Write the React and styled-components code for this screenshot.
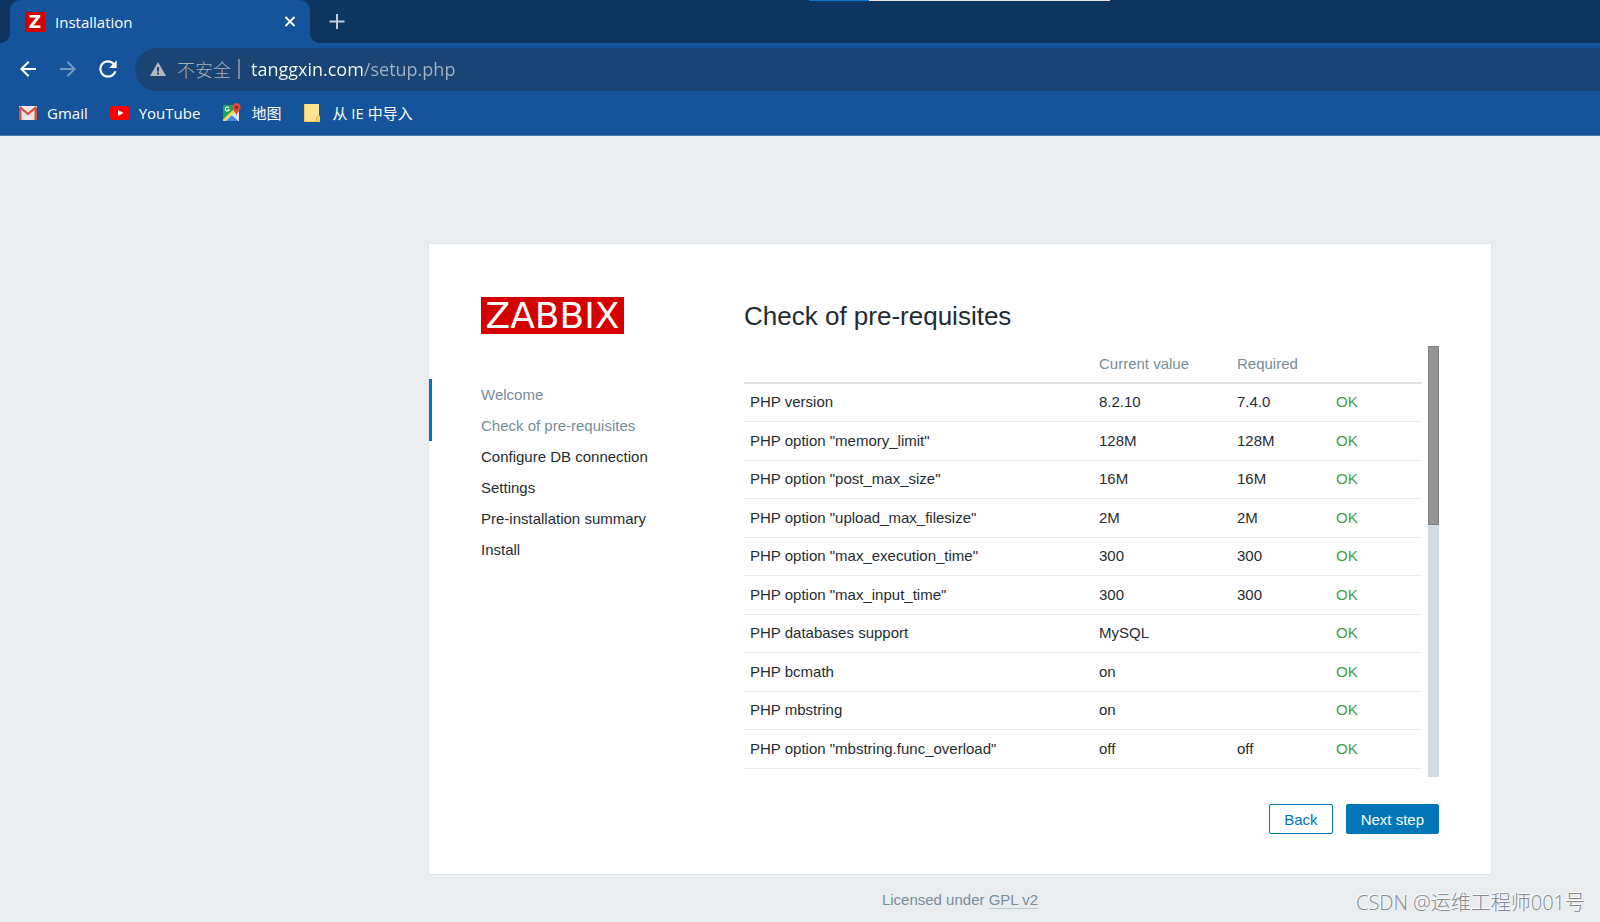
import React from "react";
import styled, { createGlobalStyle } from "styled-components";

const GlobalStyle = createGlobalStyle`
  * {
    box-sizing: border-box;
  }
  body {
    margin: 0;
    background: #e9edf0;
    color: #1f2c33;
    font-family: "Liberation Sans", Arial, sans-serif;
    font-size: 15px;
    line-height: 20px;
  }
`;

const uiFont = `"Open Sans", "Noto Sans CJK SC", sans-serif`;

const Screen = styled.div`
  position: relative;
  min-height: 100vh;
  overflow: hidden;
`;

/* browser */

const Browser = styled.header`
  background: #15539a;
  border-bottom: 1px solid #4a7ab3;
  color: #fff;
  font-family: ${uiFont};
`;

const TabStrip = styled.div`
  position: relative;
  display: flex;
  align-items: center;
  gap: 17px;
  height: 43px;
  padding-left: 10px;
  background: #0c3560;
`;

const Tab = styled.div`
  position: relative;
  display: flex;
  align-items: center;
  gap: 10px;
  width: 300px;
  height: 43px;
  padding: 0 10px 0 15px;
  border-radius: 10px 10px 0 0;
  background: #15539a;

  &::before,
  &::after {
    content: "";
    position: absolute;
    bottom: 0;
    width: 10px;
    height: 10px;
  }
  &::before {
    right: 100%;
    background: radial-gradient(circle at 0 0, transparent 10px, #15539a 10px);
  }
  &::after {
    left: 100%;
    background: radial-gradient(
      circle at 100% 0,
      transparent 10px,
      #15539a 10px
    );
  }
`;

const Favicon = styled.span`
  width: 20px;
  height: 20px;
  background: #d40000;
  font: bold 17px/20px "DejaVu Sans", sans-serif;
  text-align: center;
`;

const TabTitle = styled.span`
  flex: 1;
`;

const IconButton = styled.button`
  display: flex;
  align-items: center;
  justify-content: center;
  width: ${(p) => p.$size}px;
  height: ${(p) => p.$size}px;
  padding: 0;
  border: 0;
  background: none;
  color: ${(p) => p.$color || "#fff"};
`;

const LoadingLine = styled.div`
  position: absolute;
  top: 0;
  left: 809px;
  width: 301px;
  height: 1px;
  background: linear-gradient(to right, #0078d7 60px, #e6e6e6 60px);
`;

const Toolbar = styled.div`
  display: flex;
  align-items: center;
  gap: 14px;
  padding: 5px 0 0 15px;

  ${IconButton} {
    margin-bottom: 2px;
  }
`;

const AddressBar = styled.label`
  flex: 1;
  display: flex;
  align-items: center;
  height: 43px;
  padding: 0 0 2px 15px;
  border-radius: 22px 0 0 22px;
  background: #1a4473;
  font-size: 18px;
`;

const Insecure = styled.span`
  margin-left: 11px;
  padding-right: 7px;
  border-right: 2px solid #7189a5;
  color: #a9b1bb;
  font-family: "Noto Sans CJK SC", sans-serif;
  font-weight: 300;
`;

const AddressInput = styled.input`
  flex: 1;
  min-width: 0;
  height: 30px;
  margin-left: 11px;
  padding: 0;
  border: 0;
  background: linear-gradient(to right, #fff 113px, #a3b4c7 113px);
  background-clip: text;
  color: transparent;
  font-family: ${uiFont};
  font-size: 18px;
`;

const Bookmarks = styled.nav`
  display: flex;
  align-items: center;
  gap: 22px;
  height: 44px;
  padding-left: 18px;
`;

const Bookmark = styled.a`
  display: flex;
  align-items: center;
  gap: 9px;
  color: #fff;
  text-decoration: none;
`;

/* setup wizard */

const Page = styled.main`
  display: flex;
  flex-direction: column;
  align-items: center;
  padding: 107px 0 0 320px;
`;

const Card = styled.div`
  display: flex;
  width: 100%;
  max-width: 1064px;
  border: 1px solid #dfe4e7;
  background: #fff;
`;

const Sidebar = styled.aside`
  width: 315px;
  padding-top: 53px;
`;

const Logo = styled.div`
  width: 143px;
  height: 37px;
  margin: 0 0 45px 52px;
  background: #d40000;
  color: #fff;
  font: 36px/38px "DejaVu Sans", sans-serif;
  text-align: center;
`;

const Steps = styled.ul`
  margin: 0;
  padding: 0;
  list-style: none;
`;

const Step = styled.li`
  padding-left: 49px;
  border-left: 3px solid ${(p) => (p.$done ? "#0275b8" : "transparent")};
  color: ${(p) => (p.$done ? "#768d99" : "inherit")};
  line-height: 31px;
`;

const Content = styled.section`
  flex: 1;
  min-width: 0;
  padding: 57px 52px 40px 0;
`;

const Title = styled.h1`
  margin: 0 0 15px;
  font-size: 26px;
  font-weight: 400;
  line-height: 30px;
`;

const ScrollArea = styled.div`
  display: flex;
  gap: 6px;
  height: 431px;
`;

const ScrollTrack = styled.div`
  width: 11px;
  background: #d2d9df;
`;

const ScrollThumb = styled.div`
  height: 179px;
  border: 1px solid #7f7f7f;
  background: #939493;
`;

const TableBox = styled.div`
  flex: 1;
  min-width: 0;
  overflow: hidden;
`;

const Table = styled.table`
  width: 100%;
  table-layout: fixed;
  border-collapse: separate;
  border-spacing: 0;
`;

const HeadCell = styled.th`
  width: ${(p) => p.$width || "auto"};
  height: 38px;
  padding: 0 6px;
  border-bottom: 2px solid #dce2e5;
  color: #768d99;
  font-weight: 400;
  text-align: left;
`;

const Row = styled.tr`
  height: 38px;

  &:nth-child(even) {
    height: 39px;
  }
`;

const Cell = styled.td`
  padding: 0 6px 1px;
  border-bottom: 1px solid #ebeef0;
  color: ${(p) => (p.$ok ? "#429e47" : "inherit")};
`;

const Actions = styled.div`
  display: flex;
  justify-content: flex-end;
  gap: 13px;
  margin-top: 27px;
`;

const Button = styled.button`
  height: 30px;
  padding: 1px 14px 0;
  border: 1px solid #0275b8;
  border-radius: 2px;
  background: ${(p) => (p.$primary ? "#0275b8" : "#fff")};
  color: ${(p) => (p.$primary ? "#fff" : "#0275b8")};
  font: inherit;
`;

const License = styled.footer`
  margin-top: 15px;
  color: #768d99;
`;

const LicenseLink = styled.a`
  border-bottom: 1px solid #c0cad0;
  color: inherit;
  text-decoration: none;
`;

const Watermark = styled.div`
  position: absolute;
  right: 15px;
  bottom: 6px;
  color: #85898b;
  font: 300 20px/26px ${uiFont};
  text-shadow: -1px -1px 0 #fff;
`;

const BackIcon = () => (
  <svg width="24" height="24" viewBox="0 0 24 24" fill="currentColor">
    <path d="M20 11H7.83l5.59-5.59L12 4l-8 8 8 8 1.41-1.41L7.83 13H20v-2z" />
  </svg>
);

const ForwardIcon = () => (
  <svg width="24" height="24" viewBox="0 0 24 24" fill="currentColor">
    <path d="M4 11h12.17l-5.59-5.59L12 4l8 8-8 8-1.41-1.41L16.17 13H4v-2z" />
  </svg>
);

const ReloadIcon = () => (
  <svg width="26" height="26" viewBox="0 0 24 24" fill="currentColor">
    <path d="M17.65 6.35C16.2 4.9 14.21 4 12 4c-4.42 0-7.99 3.58-7.99 8s3.57 8 7.99 8c3.73 0 6.84-2.55 7.73-6h-2.08c-.82 2.33-3.04 4-5.65 4-3.31 0-6-2.69-6-6s2.69-6 6-6c1.66 0 3.14.69 4.22 1.78L13 11h7V4l-2.35 2.35z" />
  </svg>
);

const CloseIcon = () => (
  <svg width="12" height="12" viewBox="0 0 12 12" stroke="currentColor">
    <path d="M1.500 1l9 9M10.500 1l-9 9" strokeWidth="1.800" />
  </svg>
);

const PlusIcon = () => (
  <svg width="16" height="16" viewBox="0 0 16 16" stroke="currentColor">
    <path d="M8 0v15M0.500 7.500h15" strokeWidth="2" />
  </svg>
);

const WarningIcon = () => (
  <svg width="16" height="14" viewBox="0 0 16 14">
    <path d="M8 0l8 14H0z" fill="#b4babf" />
    <path d="M8 5v4.500M8 10.500v2" stroke="#1a4473" strokeWidth="2" />
  </svg>
);

const GmailIcon = () => (
  <svg width="20" height="20" viewBox="0 0 20 20">
    <rect x="1" y="3" width="18" height="14" rx="1" fill="#e9e9ea" />
    <path d="M3 17l5-6M17 17l-5-6" stroke="#cfcfd2" />
    <path d="M1 17V4.500L3.500 6V17z" fill="#d6503f" />
    <path d="M19 17V4.500L16.500 6V17z" fill="#d6503f" />
    <path d="M1.800 4l8.200 7 8.200-7" fill="none" stroke="#dc4a3d" strokeWidth="2.200" />
  </svg>
);

const YouTubeIcon = () => (
  <svg width="20" height="20" viewBox="0 0 20 20">
    <rect y="3" width="20" height="14" rx="3.500" fill="#f00" />
    <path d="M8 7l5.500 3L8 13z" fill="#fff" />
  </svg>
);

const MapsIcon = () => (
  <svg width="20" height="20" viewBox="0 0 20 20">
    <rect x="1" y="2" width="16" height="16" rx="1" fill="#1da35b" />
    <path d="M17 3v15L9 11z" fill="#dfe1e3" />
    <path d="M1 16.500L13 5l2 2L3 18H1z" fill="#fbd14b" />
    <path d="M4 18l6-6 6.500 6z" fill="#4384f3" />
    <path d="M3.500 18L9.800 11.500 17 18" fill="none" stroke="#fff" />
    <path
      d="M6.800 4.800a2 2 0 1 0 .3 2H5.500"
      fill="none"
      stroke="#fff"
      strokeWidth="1.100"
    />
    <path
      d="M14.500 0a4.200 4.200 0 0 1 4.200 4.200c0 2.800-3.300 4.300-4.200 8.300-.9-4-4.200-5.500-4.200-8.300A4.200 4.200 0 0 1 14.500 0z"
      fill="#e4473a"
    />
    <circle cx="14.500" cy="4.200" r="1.500" fill="#7f1d16" />
  </svg>
);

const FolderIcon = () => (
  <svg width="20" height="20" viewBox="0 0 20 20">
    <path d="M1 1h15v11.500l1 1V19H1z" fill="#ffe591" />
    <path d="M1 18.500h15M1.500 1v18" stroke="#f0c64f" />
    <path d="M13.500 18.500v-4.500l2.500-1.500 1 1V19h-3.500z" fill="#f7d263" />
    <path d="M13.500 18.500v-4.500l2-1.200" fill="none" stroke="#e3b53c" />
  </svg>
);

const bookmarks = [
  { name: "Gmail", Icon: GmailIcon },
  { name: "YouTube", Icon: YouTubeIcon },
  { name: "地图", Icon: MapsIcon },
  { name: "从 IE 中导入", Icon: FolderIcon },
];

const steps = [
  "Welcome",
  "Check of pre-requisites",
  "Configure DB connection",
  "Settings",
  "Pre-installation summary",
  "Install",
];
const currentStep = 1;

const checks = [
  ["PHP version", "8.2.10", "7.4.0"],
  ['PHP option "memory_limit"', "128M", "128M"],
  ['PHP option "post_max_size"', "16M", "16M"],
  ['PHP option "upload_max_filesize"', "2M", "2M"],
  ['PHP option "max_execution_time"', "300", "300"],
  ['PHP option "max_input_time"', "300", "300"],
  ["PHP databases support", "MySQL", ""],
  ["PHP bcmath", "on", ""],
  ["PHP mbstring", "on", ""],
  ['PHP option "mbstring.func_overload"', "off", "off"],
];

const BrowserChrome = () => (
  <Browser>
    <TabStrip>
      <Tab>
        <Favicon>Z</Favicon>
        <TabTitle>Installation</TabTitle>
        <IconButton $size={20} aria-label="Close tab">
          <CloseIcon />
        </IconButton>
      </Tab>
      <IconButton $size={20} $color="#c3cddb" aria-label="New tab">
        <PlusIcon />
      </IconButton>
      <LoadingLine />
    </TabStrip>
    <Toolbar>
      <IconButton $size={26} aria-label="Back">
        <BackIcon />
      </IconButton>
      <IconButton $size={26} $color="#7398c4" aria-label="Forward">
        <ForwardIcon />
      </IconButton>
      <IconButton $size={26} aria-label="Reload">
        <ReloadIcon />
      </IconButton>
      <AddressBar htmlFor="address">
        <WarningIcon />
        <Insecure>不安全</Insecure>
        <AddressInput
          id="address"
          type="text"
          defaultValue="tanggxin.com/setup.php"
        />
      </AddressBar>
    </Toolbar>
    <Bookmarks>
      {bookmarks.map(({ name, Icon }) => (
        <Bookmark href="#" key={name}>
          <Icon />
          {name}
        </Bookmark>
      ))}
    </Bookmarks>
  </Browser>
);

const Requirements = () => (
  <ScrollArea>
    <TableBox>
      <Table>
        <thead>
          <tr>
            <HeadCell />
            <HeadCell $width="138px">Current value</HeadCell>
            <HeadCell $width="99px">Required</HeadCell>
            <HeadCell $width="92px" />
          </tr>
        </thead>
        <tbody>
          {checks.map(([name, current, required]) => (
            <Row key={name}>
              <Cell>{name}</Cell>
              <Cell>{current}</Cell>
              <Cell>{required}</Cell>
              <Cell $ok>OK</Cell>
            </Row>
          ))}
        </tbody>
      </Table>
    </TableBox>
    <ScrollTrack>
      <ScrollThumb />
    </ScrollTrack>
  </ScrollArea>
);

const App = () => (
  <Screen>
    <GlobalStyle />
    <BrowserChrome />
    <Page>
      <Card>
        <Sidebar>
          <Logo>ZABBIX</Logo>
          <Steps>
            {steps.map((step, i) => (
              <Step key={step} $done={i <= currentStep}>
                {step}
              </Step>
            ))}
          </Steps>
        </Sidebar>
        <Content>
          <Title>Check of pre-requisites</Title>
          <Requirements />
          <Actions>
            <Button>Back</Button>
            <Button $primary>Next step</Button>
          </Actions>
        </Content>
      </Card>
      <License>
        Licensed under <LicenseLink href="#">GPL v2</LicenseLink>
      </License>
    </Page>
    <Watermark>CSDN @运维工程师001号</Watermark>
  </Screen>
);

export default App;
